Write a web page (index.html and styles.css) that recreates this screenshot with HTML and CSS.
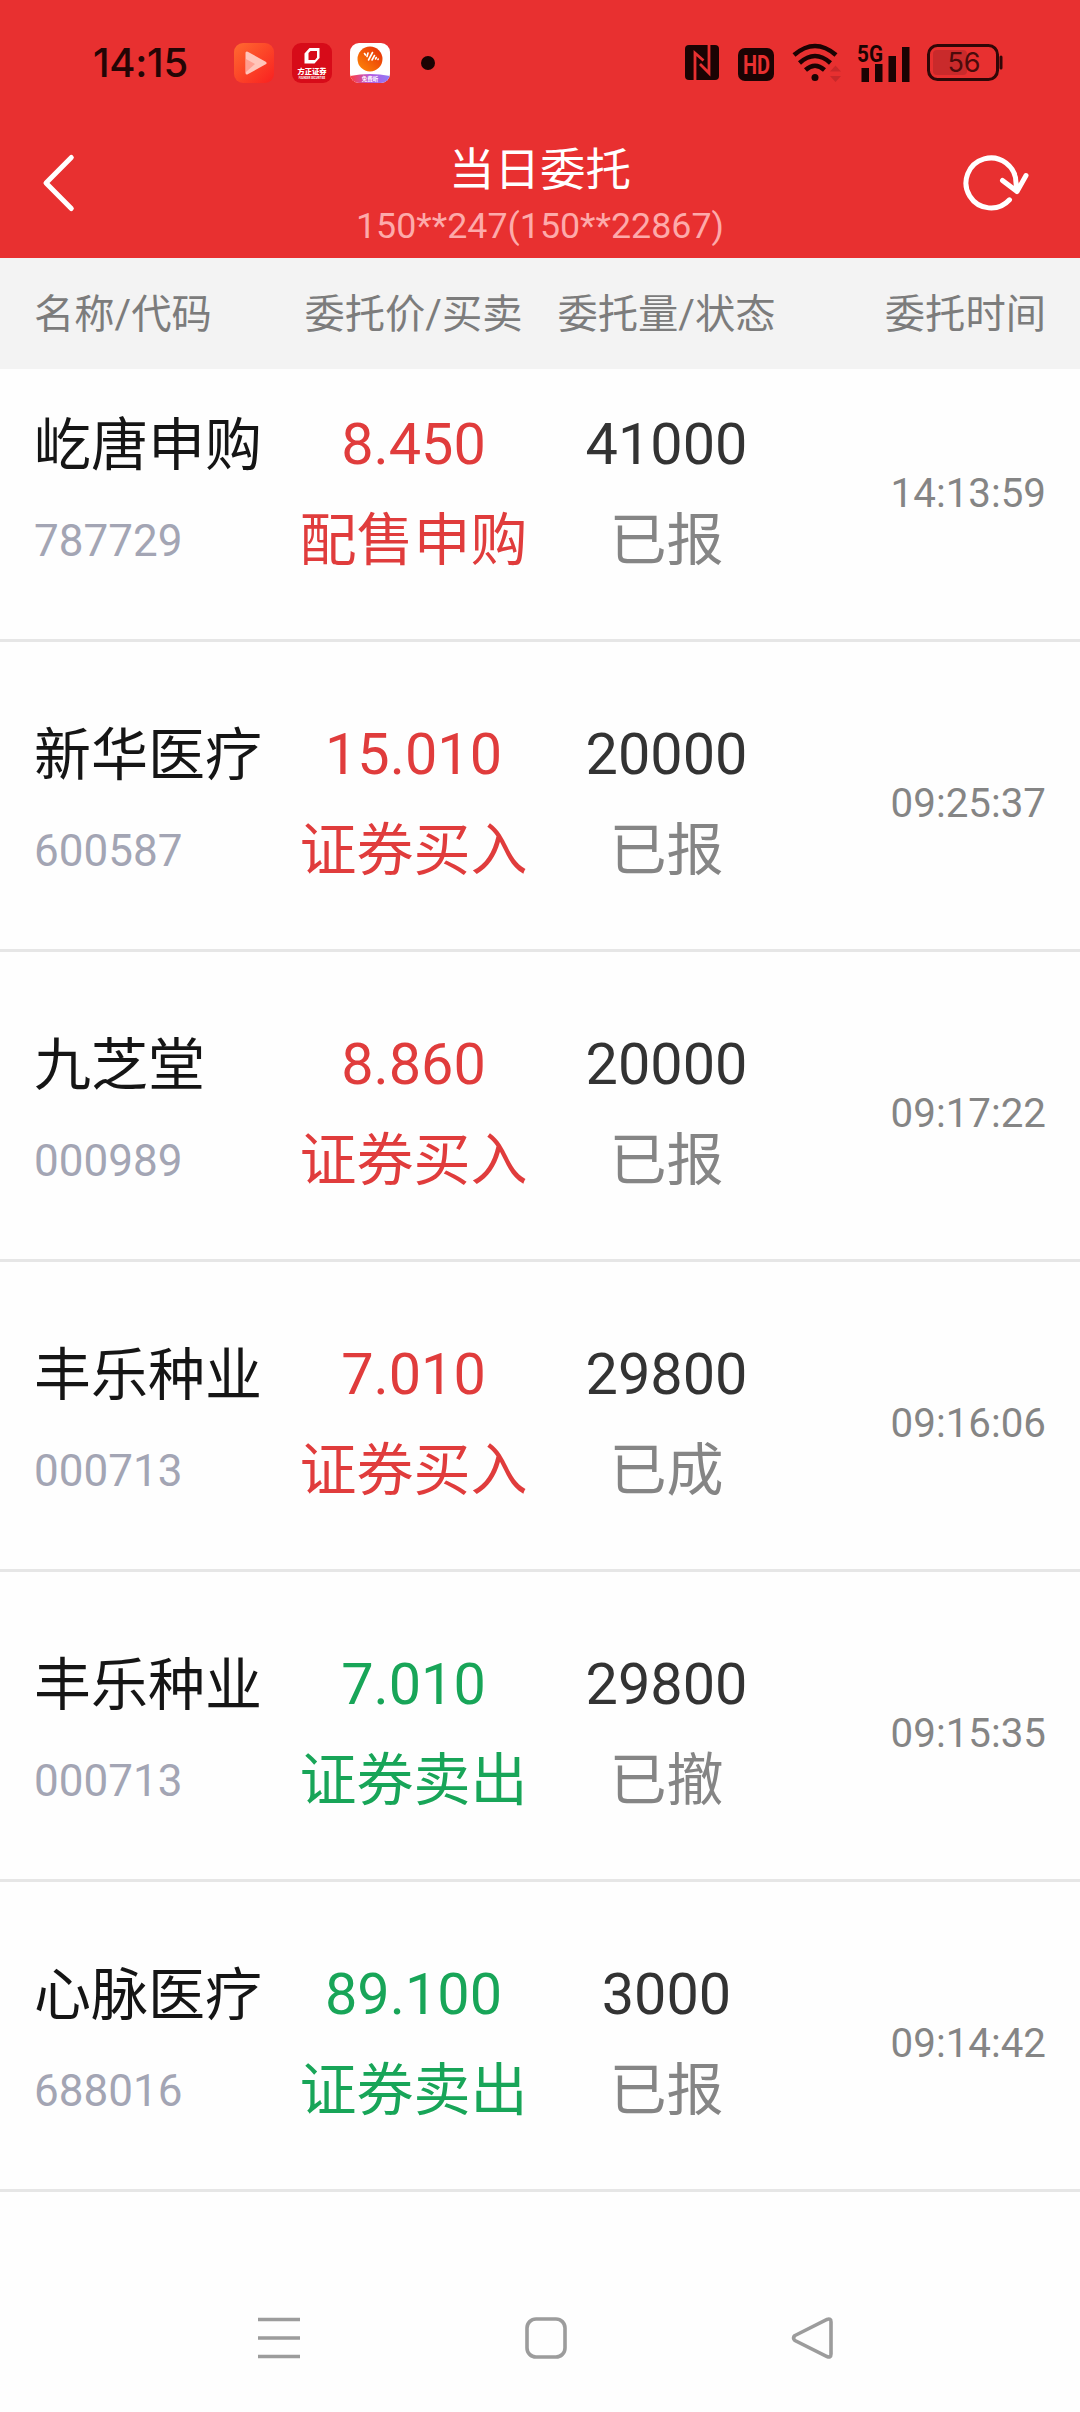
FILE: index.html
```html
<!DOCTYPE html>
<html lang="zh-CN">
<head>
<meta charset="utf-8">
<title>当日委托</title>
<link rel="stylesheet" href="styles.css">
</head>
<body>
<div class="top">
  <div class="status">
    <span class="clock">14:15</span>
    <div class="apps">
      <svg width="40" height="40" viewBox="0 0 40 40">
        <defs><linearGradient id="play" x1="0" y1="0" x2="1" y2="1"><stop offset="0" stop-color="#ff6a30"/><stop offset="1" stop-color="#f92020"/></linearGradient></defs>
        <rect width="40" height="40" rx="9" fill="url(#play)"/>
        <path d="M13 10v20l18-10z" fill="#ffc5ba" stroke="#ffc5ba" stroke-width="3" stroke-linejoin="round"/>
        <path d="M12 16l9 5-9 8z" fill="#ff9e90"/>
      </svg>
      <svg width="40" height="40" viewBox="0 0 40 40">
        <rect width="40" height="40" rx="9" fill="#d70b19"/>
        <path d="M17.500 5H27.500v10l-5 5.500H12.500V10.500zM16.500 10v7h6.500l2-2.500V8h-6.500z" fill="#fff" fill-rule="evenodd"/>
        <text class="founder" x="20" y="31">方正证券</text>
        <text class="founder-sub" x="20" y="35.500">FOUNDER SECURITIES</text>
      </svg>
      <svg width="40" height="40" viewBox="0 0 40 40">
        <defs>
          <linearGradient id="ball" x1="1" y1="0" x2="0" y2="1"><stop offset="0" stop-color="#e52a08"/><stop offset="1" stop-color="#ff8a08"/></linearGradient>
          <linearGradient id="band"><stop offset="0" stop-color="#ff3c3c"/><stop offset=".5" stop-color="#b65ae0"/><stop offset="1" stop-color="#8d7bf5"/></linearGradient>
          <clipPath id="tile"><rect width="40" height="40" rx="9"/></clipPath>
        </defs>
        <g clip-path="url(#tile)">
          <rect width="40" height="40" fill="#fff"/>
          <path d="M0 33Q20 29 40 33V40H0z" fill="url(#band)"/>
          <circle cx="20" cy="16" r="12.500" fill="url(#ball)"/>
          <path d="M14.500 10.500l1 1.500M17 13.500l1-3.500M18.500 17l4-7.500M22 17l2.500-4.500M25.500 16l.8-1.500M28 16.500l.2-.5" stroke="#fff" stroke-width="1.600" stroke-linecap="round"/>
          <text class="listen" x="20" y="37.500">免费听</text>
        </g>
      </svg>
    </div>
    <span class="dot"></span>
    <svg class="nfc" width="34" height="35" viewBox="0 0 34 35">
      <rect width="34" height="35" rx="4" fill="#1b0303"/>
      <path d="M10 35V8L18.500 15.500M24 0V28L15 19" fill="none" stroke="#e83030" stroke-width="2.800"/>
    </svg>
    <svg class="hd" width="36" height="33" viewBox="0 0 36 33">
      <rect width="36" height="33" rx="7" fill="#1b0303"/>
      <text x="5" y="25.500" textLength="27" lengthAdjust="spacingAndGlyphs">HD</text>
    </svg>
    <svg class="wifi" width="50" height="39" viewBox="0 0 50 39">
      <g fill="none" stroke="#1b0303" stroke-width="4.500"><path d="M2 12Q23-6 44 12M7.500 20Q23 6 38.500 20M13.500 27Q23 18.500 32.500 27"/></g>
      <circle cx="23" cy="34.500" r="3.500" fill="#1b0303"/>
      <path d="M38 28.500l5.500-6 5.500 6zM38 33l5.500 6 5.500-6z" fill="#c9282a"/>
    </svg>
    <svg class="signal" width="53" height="38" viewBox="0 0 53 38">
      <text x="0" y="17.500" textLength="26" lengthAdjust="spacingAndGlyphs">5G</text>
      <path d="M4.500 24h7.500v14H4.500zM18 20h7.500v18H18zM31.500 12H39v26h-7.500zM45 3h7.500v35H45z" fill="#1b0303"/>
    </svg>
    <svg class="battery" width="77" height="37" viewBox="0 0 77 37">
      <rect x="6" y="6" width="34" height="25" rx="4" fill="#c92a2b"/>
      <rect x="1.500" y="1.500" width="69" height="34" rx="9" fill="none" stroke="#300707" stroke-width="3"/>
      <path d="M74 13v11" stroke="#300707" stroke-width="3" stroke-linecap="round"/>
      <text x="37" y="28">56</text>
    </svg>
  </div>
  <div class="bar">
    <svg class="back" width="40" height="60" viewBox="0 0 40 60"><path d="M31.300 4.500L6 30l25.300 25.500"/></svg>
    <div class="heading">
      <h1>当日委托</h1>
      <p>150**247(150**22867)</p>
    </div>
    <svg class="refresh" width="70" height="60" viewBox="0 0 70 60"><path d="M49.500 46.800A25 25 0 1 1 56 30L57 38.500M42.500 27.500L57 38.500L66 22.500"/></svg>
  </div>
</div>
<div class="columns">
  <span>名称/代码</span><span>委托价/买卖</span><span>委托量/状态</span><span>委托时间</span>
</div>
<main>
  <div class="order buy"><div><b>屹唐申购</b><i>787729</i></div><div class="deal"><em>8.450</em><b>配售申购</b></div><div class="state"><em>41000</em><b>已报</b></div><time>14:13:59</time></div>
  <div class="order buy"><div><b>新华医疗</b><i>600587</i></div><div class="deal"><em>15.010</em><b>证券买入</b></div><div class="state"><em>20000</em><b>已报</b></div><time>09:25:37</time></div>
  <div class="order buy"><div><b>九芝堂</b><i>000989</i></div><div class="deal"><em>8.860</em><b>证券买入</b></div><div class="state"><em>20000</em><b>已报</b></div><time>09:17:22</time></div>
  <div class="order buy"><div><b>丰乐种业</b><i>000713</i></div><div class="deal"><em>7.010</em><b>证券买入</b></div><div class="state"><em>29800</em><b>已成</b></div><time>09:16:06</time></div>
  <div class="order sell"><div><b>丰乐种业</b><i>000713</i></div><div class="deal"><em>7.010</em><b>证券卖出</b></div><div class="state"><em>29800</em><b>已撤</b></div><time>09:15:35</time></div>
  <div class="order sell"><div><b>心脉医疗</b><i>688016</i></div><div class="deal"><em>89.100</em><b>证券卖出</b></div><div class="state"><em>3000</em><b>已报</b></div><time>09:14:42</time></div>
</main>
<nav>
  <svg width="42" height="42" viewBox="0 0 42 42"><path d="M0 2.500h42M0 21h42M0 39.500h42"/></svg>
  <svg width="42" height="42" viewBox="0 0 42 42"><rect x="2" y="2" width="38" height="38" rx="9"/></svg>
  <svg width="42" height="42" viewBox="0 0 42 42"><path d="M3 18.500L35 2.500Q39 1 39 5V37Q39 41 35 39.500L3 23.500Q0 21 3 18.500z"/></svg>
</nav>
</body>
</html>
```
FILE: styles.css
```css
* { box-sizing: border-box; }
body { margin: 0; width: 1080px; height: 2412px; background: #fefefe; font-family: Roboto, "Noto Sans CJK SC", sans-serif; display: flex; flex-direction: column; }
svg { display: block; flex: none; overflow: visible; }

.top { background: #e83030; height: 258px; }
.status { height: 125px; padding: 0 76px 0 93px; display: flex; align-items: center; }
.clock { width: 141px; font: 500 40px/40px Inter, sans-serif; letter-spacing: -.3px; color: #240505; }
.apps { display: flex; gap: 18px; }
.dot { width: 14px; height: 14px; border-radius: 50%; background: #1b0303; margin-left: 31px; }
.nfc { margin-left: 250px; }
.hd { margin: 3px 0 0 19px; }
.wifi { margin-left: 18px; }
.signal { margin-left: 15px; }
.battery { margin-left: 17px; }
.founder { font: 900 7.300px "Noto Sans CJK SC", sans-serif; fill: #fff; text-anchor: middle; }
.founder-sub { font: 700 2.600px Roboto, sans-serif; fill: #fff; text-anchor: middle; }
.listen { font: 700 5.500px "Noto Sans CJK SC", sans-serif; fill: #fff; text-anchor: middle; }
.hd text { font: 700 25px Roboto, sans-serif; fill: #e83030; }
.signal text { font: 700 24px Roboto, sans-serif; fill: #1b0303; }
.battery text { font: 400 27px Inter, sans-serif; fill: #4a0b0b; text-anchor: middle; }

.bar { height: 133px; padding: 0 40px; display: grid; grid-template-columns: 1fr auto 1fr; align-items: start; }
.bar > svg { margin-top: 27.500px; fill: none; stroke: #fff; stroke-width: 5; stroke-linecap: round; stroke-linejoin: round; }
.bar .refresh { margin-right: 10px; justify-self: end; }
.heading { text-align: center; color: #fff; padding-top: 19px; }
h1 { margin: 0; font-size: 45.500px; font-weight: 400; line-height: 54px; }
p { margin: 0; font-size: 35.800px; line-height: 56px; color: #fdaaaa; }

.columns, .order { display: grid; grid-template-columns: repeat(4, 253px); padding: 0 34px; text-align: center; }
.columns { height: 111px; line-height: 113px; background: #f3f3f3; color: #7c7c7c; font-size: 40.300px; }
.columns :first-child { text-align: left; }
.columns :last-child { text-align: right; }

.order { height: 310px; padding-top: 66px; border-bottom: 3px solid #e6e6e6; }
.order:first-child { height: 273px; padding-top: 29px; }
.order > div > * { display: block; font-style: normal; font-weight: 400; font-size: 57.600px; line-height: 94px; }
.order > div > b { font-size: 57px; line-height: 96px; }
.order > div > i { font-size: 44px; line-height: 95px; color: #a3a5b4; }
.order > div:first-child { text-align: left; color: #151515; }
.deal b, .state b { padding-top: 1px; }
.buy .deal { color: #e03c3c; }
.sell .deal { color: #18a558; }
.state em { color: #333; }
.order > .state b { color: #858585; }
time { font-size: 40.300px; line-height: 191px; text-align: right; color: #858585; }

nav { margin-top: 125px; padding: 0 246px 0 258px; display: flex; justify-content: space-between; }
nav svg { fill: none; stroke: #9c9c9c; stroke-width: 3.600px; }
```
